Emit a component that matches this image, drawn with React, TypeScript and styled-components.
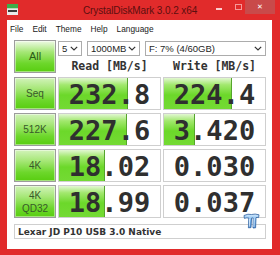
import React from "react";
import styled, { createGlobalStyle } from "styled-components";

type Result = { label: string[]; read: string; readBar: number; write: string; writeBar: number };

const results: Result[] = [
  { label: ["Seq"], read: "232.8", readBar: 67, write: "224.4", writeBar: 66 },
  { label: ["512K"], read: "227.6", readBar: 66, write: "3.420", writeBar: 30 },
  { label: ["4K"], read: "18.02", readBar: 44.5, write: "0.030", writeBar: 0 },
  { label: ["4K", "QD32"], read: "18.99", readBar: 44.5, write: "0.037", writeBar: 0 },
];

const Chevron = () => (
  <svg width="8" height="5" viewBox="0 0 8 5">
    <polyline points="0.8,0.8 4,4 7.2,0.8" fill="none" stroke="#333" strokeWidth="1.2" />
  </svg>
);

const App = () => {
  return (
    <Window>
      <GlobalStyle />
      <TitleBar>
        <AppIcon width="11" height="11" viewBox="0 0 11 11">
          <rect x="0" y="0" width="11" height="4" fill="#3fae49" />
          <rect x="0" y="4" width="11" height="7" fill="#e9e9e9" />
          <rect x="1" y="6" width="9" height="2" fill="#3a3a3a" />
          <rect x="0" y="4" width="11" height="1" fill="#b9d9bb" />
        </AppIcon>
        <Title>CrystalDiskMark 3.0.2 x64</Title>
        <WinButtons>
          <WinButton $w={24}>
            <MinGlyph />
          </WinButton>
          <WinButton $w={14}>
            <MaxGlyph />
          </WinButton>
          <CloseButton>✕</CloseButton>
        </WinButtons>
      </TitleBar>
      <Client>
        <MenuBar>
          <MenuItem>File</MenuItem>
          <MenuItem>Edit</MenuItem>
          <MenuItem>Theme</MenuItem>
          <MenuItem>Help</MenuItem>
          <MenuItem>Language</MenuItem>
        </MenuBar>
        <Board>
          <TestButton $big>All</TestButton>
          <TopPanel>
            <Controls>
              <Select $w={24}>
                <span>5</span>
                <Chevron />
              </Select>
              <Select $w={53}>
                <span>1000MB</span>
                <Chevron />
              </Select>
              <Select $w={121}>
                <span>F: 7% (4/60GB)</span>
                <Chevron />
              </Select>
            </Controls>
            <Headers>
              <Header>Read [MB/s]</Header>
              <Header>Write [MB/s]</Header>
            </Headers>
          </TopPanel>
          {results.map((r) => (
            <React.Fragment key={r.label.join(" ")}>
              <TestButton>
                {r.label.map((l) => (
                  <span key={l}>{l}</span>
                ))}
              </TestButton>
              <Cell>
                <Bar $w={r.readBar} />
                <Value>{r.read}</Value>
              </Cell>
              <Cell>
                <Bar $w={r.writeBar} />
                <Value>{r.write}</Value>
              </Cell>
            </React.Fragment>
          ))}
          <Comment>Lexar JD P10 USB 3.0 Native</Comment>
          <Watermark width="17" height="16" viewBox="0 0 17 16">
            <defs>
              <linearGradient id="tt" x1="0" y1="0" x2="0" y2="1">
                <stop offset="0" stopColor="#d6ebfd" />
                <stop offset="0.45" stopColor="#78b6ee" />
                <stop offset="1" stopColor="#4a8fd8" />
              </linearGradient>
            </defs>
            <path
              d="M1 2.5 Q5 0.5 8.5 1.5 Q12 0.5 16 1.8 L15.6 4.6 Q13.8 4.2 13 4.6 L12.6 14.8 L10 15 L10.2 5 Q9 4.8 8.6 5 L8 14.6 L5.4 14.8 L5.8 5 Q3 4.6 1.4 5.4 Z"
              fill="url(#tt)"
              stroke="#2d5f9e"
              strokeWidth="0.8"
              strokeLinejoin="round"
            />
            <path d="M6.6 5.6 L6.3 13.6 M11.2 5.4 L10.9 14" stroke="#eef6ff" strokeWidth="0.8" />
          </Watermark>
        </Board>
      </Client>
    </Window>
  );
};

export default App;

const GlobalStyle = createGlobalStyle`
  html, body {
    margin: 0;
    padding: 0;
    background: #ffffff;
  }
  body {
    font-family: "Liberation Sans", Arial, sans-serif;
  }
`;

const Window = styled.div`
  width: 280px;
  height: 255px;
  background: #e12b2b;
  display: flex;
  flex-direction: column;
  overflow: hidden;
`;

const TitleBar = styled.div`
  height: 20px;
  display: grid;
  grid-template-columns: 1fr auto 1fr;
  align-items: start;
`;

const AppIcon = styled.svg`
  margin: 4px 0 0 7px;
  display: block;
`;

const Title = styled.div`
  font-size: 10px;
  line-height: 14px;
  margin-top: 4px;
  color: #5c0f0f;
  letter-spacing: -0.1px;
  white-space: nowrap;
`;

const WinButtons = styled.div`
  justify-self: end;
  display: flex;
  margin-right: 5px;
`;

const WinButton = styled.div<{ $w: number }>`
  width: ${(p) => p.$w}px;
  height: 14px;
  display: flex;
  align-items: center;
  justify-content: center;
`;

const MinGlyph = styled.div`
  width: 6px;
  height: 1.5px;
  margin-top: 4px;
  background: rgba(255, 235, 235, 0.85);
`;

const MaxGlyph = styled.div`
  width: 5px;
  height: 4px;
  margin-top: -1px;
  border: 1px solid rgba(255, 200, 200, 0.7);
  border-top-width: 1.5px;
`;

const CloseButton = styled.div`
  width: 30px;
  height: 14px;
  background: #c94a4a;
  color: #ffffff;
  font-family: "DejaVu Sans", sans-serif;
  font-size: 7px;
  font-weight: bold;
  line-height: 14px;
  text-align: center;
`;

const Client = styled.div`
  flex: 1;
  margin: 0 8px 6px 7px;
  background: #ffffff;
  display: flex;
  flex-direction: column;
`;

const MenuBar = styled.div`
  height: 16px;
  display: flex;
  align-items: center;
  gap: 9px;
  padding-left: 3px;
  font-size: 8.3px;
  color: #1a1a1a;
`;

const MenuItem = styled.span`
  padding-top: 1px;
`;

const Board = styled.div`
  position: relative;
  display: grid;
  grid-template-columns: 42px 103px 103px;
  grid-template-rows: 34px repeat(4, 33px) 18px;
  column-gap: 2px;
  row-gap: 3px;
  padding: 4px 0 0 7px;
`;

const TestButton = styled.div<{ $big?: boolean }>`
  display: flex;
  flex-direction: column;
  align-items: center;
  justify-content: center;
  border: 1px solid #9c9c9c;
  box-shadow: inset 0 0 0 1px rgba(255, 255, 255, 0.45);
  background: linear-gradient(
    to bottom,
    ${(p) => (p.$big ? "#eefae4" : "#d2f3ba")} 0%,
    #a6e777 35%,
    #6dd72b 72%,
    #58cd10 100%
  );
  color: ${(p) => (p.$big ? "#2c5a18" : "#38592a")};
  font-size: ${(p) => (p.$big ? 11 : 10)}px;
  line-height: 13px;
  height: 33px;
  box-sizing: border-box;
`;

const TopPanel = styled.div`
  grid-column: 2 / 4;
  display: flex;
  flex-direction: column;
  padding-top: 1px;
`;

const Controls = styled.div`
  display: flex;
  gap: 5px;
`;

const Select = styled.div<{ $w: number }>`
  width: ${(p) => p.$w}px;
  height: 15px;
  box-sizing: border-box;
  border: 1px solid #acacac;
  background: #ffffff;
  display: flex;
  align-items: center;
  justify-content: space-between;
  padding: 0 3px;
  font-size: 9.5px;
  color: #1e1e1e;
`;

const Headers = styled.div`
  display: grid;
  grid-template-columns: 103px 103px;
  column-gap: 2px;
  margin-top: 3px;
`;

const Header = styled.div`
  text-align: center;
  font-family: "DejaVu Sans Mono", monospace;
  font-weight: bold;
  font-size: 11.5px;
  line-height: 14px;
  color: #333333;
`;

const Cell = styled.div`
  display: grid;
  border: 1px solid #cfcfcf;
  background: #ffffff;
  overflow: hidden;
`;

const Bar = styled.div<{ $w: number }>`
  grid-area: 1 / 1;
  width: ${(p) => p.$w}%;
  background: linear-gradient(
    to bottom,
    #e2f7d2 0%,
    #a2e86e 22%,
    #6cd82a 55%,
    #74da34 100%
  );
  border-right: ${(p) => (p.$w > 0 ? "1px solid #55a52c" : "none")};
`;

const Value = styled.div`
  grid-area: 1 / 1;
  place-self: center;
  font-family: "DejaVu Sans Mono", monospace;
  font-weight: bold;
  font-size: 27px;
  line-height: 27px;
  color: #2f2f2f;
  margin-top: 1px;
`;

const Comment = styled.div`
  grid-column: 1 / 4;
  margin-top: 3px;
  border: 1px solid #cfcfcf;
  display: flex;
  align-items: center;
  padding-left: 3px;
  font-family: "DejaVu Sans", sans-serif;
  font-weight: bold;
  font-size: 9px;
  color: #333333;
`;

const Watermark = styled.svg`
  position: absolute;
  left: 236px;
  top: 177px;
`;
